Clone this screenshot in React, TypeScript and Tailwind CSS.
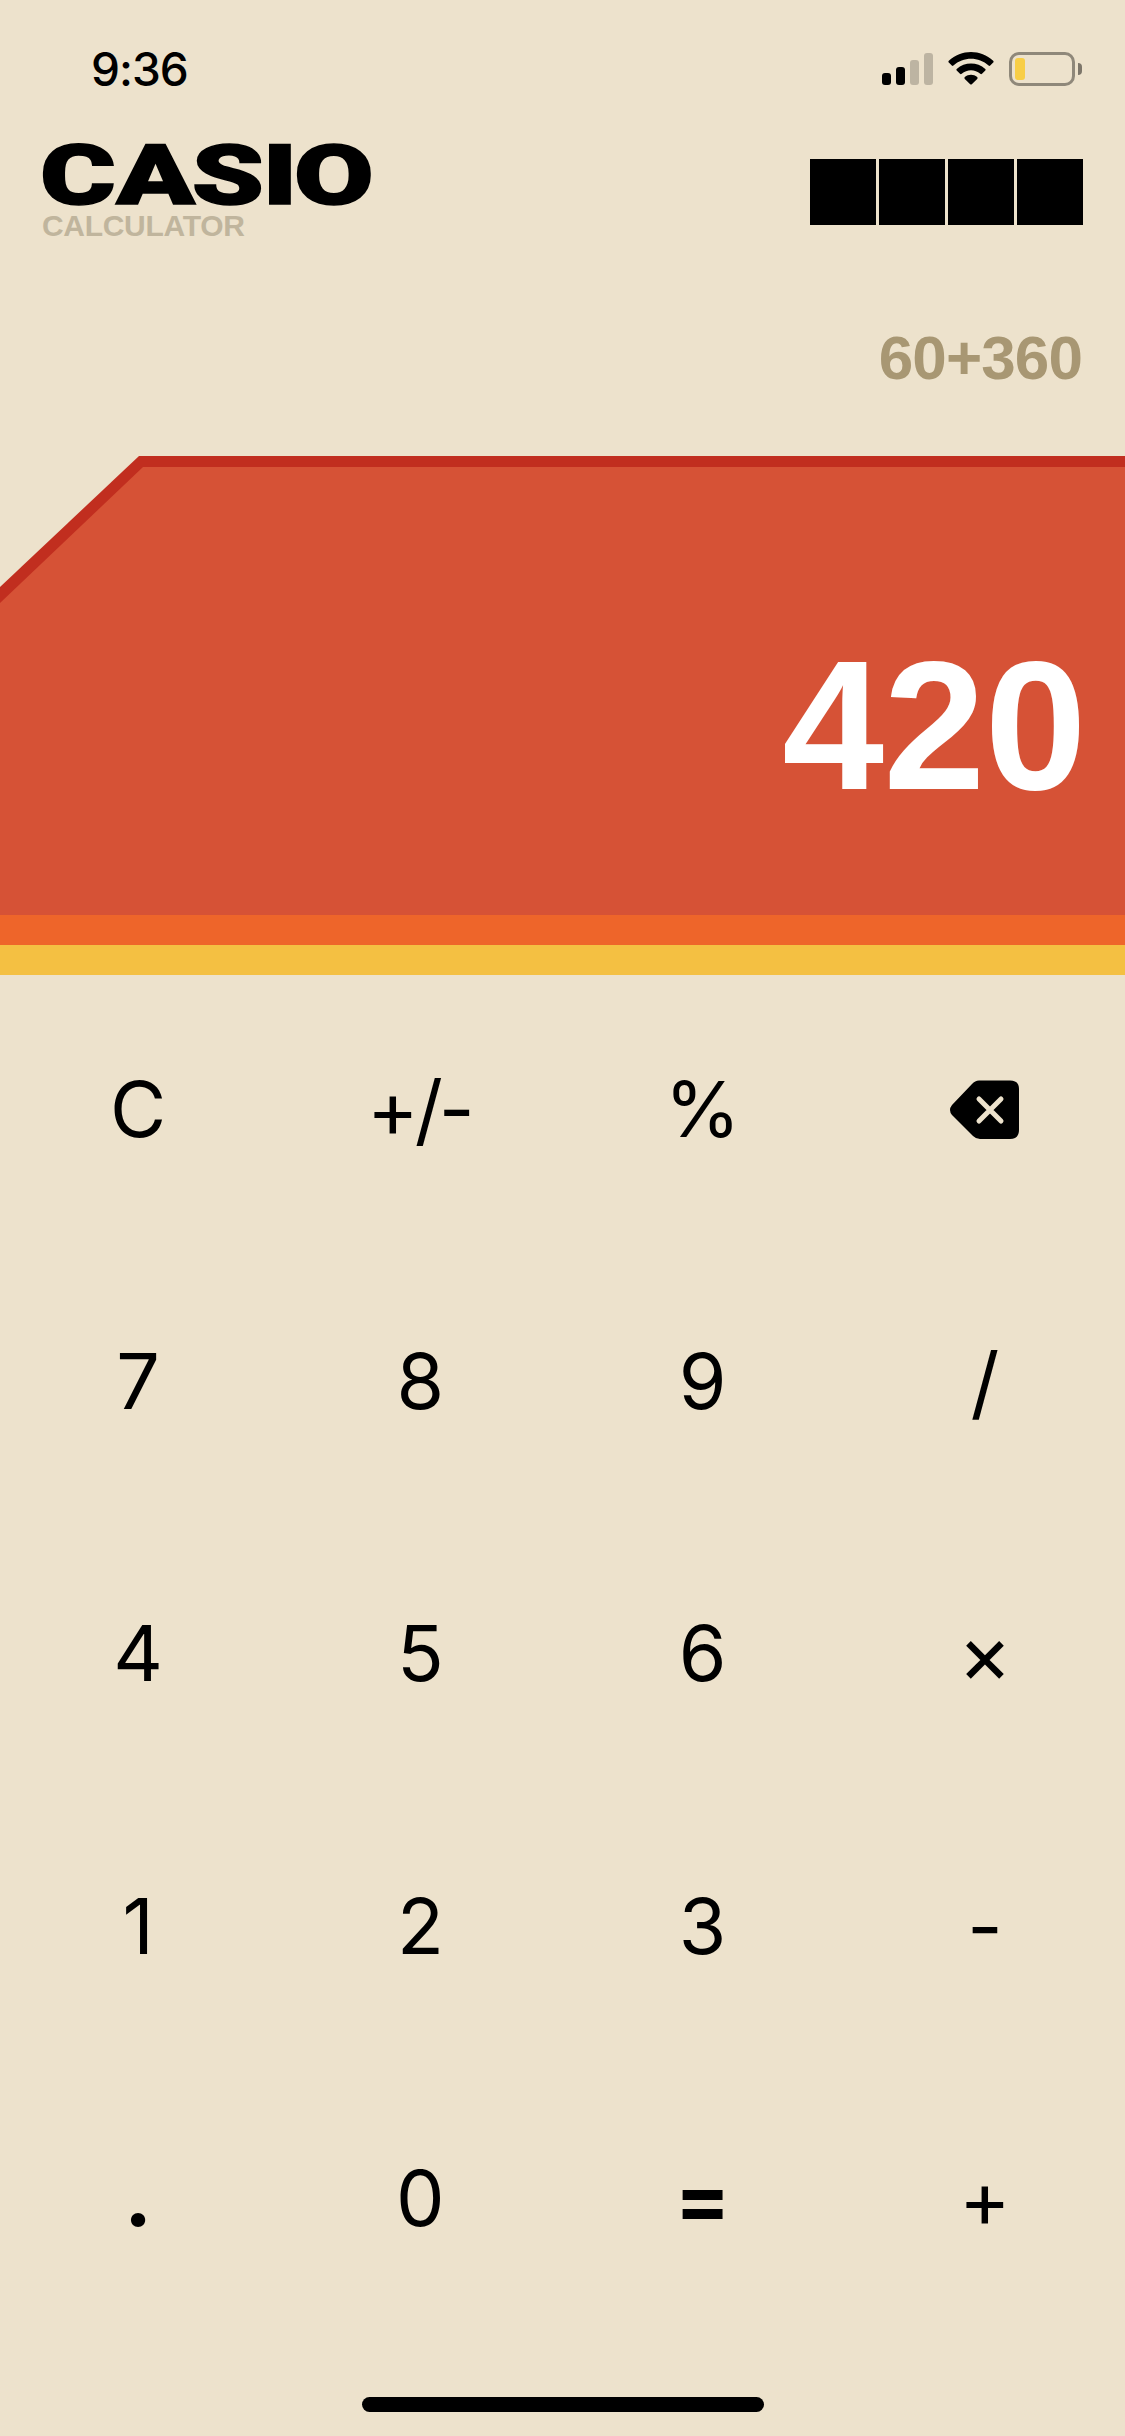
import type { ReactNode } from "react";

function StatusBar() {
  return (
    <div className="flex h-[138px] items-start justify-between pl-[91px] pr-[43px] pt-[52px]">
      <span className="text-[46px] font-[540] leading-[35px] tracking-[-1px]">9:36</span>
      <div className="flex items-start">
        <div className="mt-px flex h-8 items-end gap-[5px]">
          <i className="h-3 w-[9px] rounded-[3px] bg-black" />
          <i className="h-[18px] w-[9px] rounded-[3px] bg-black" />
          <i className="h-[25px] w-[9px] rounded-[3px] bg-[#bdb4a2]" />
          <i className="h-8 w-[9px] rounded-[3px] bg-[#bdb4a2]" />
        </div>
        <svg className="ml-[15px] h-[33px] w-[46px]" viewBox="0 0 46 33">
          <path d="M0.8 8.8C13.2-2.9 32.8-2.9 45.2 8.8Q46 9.7 45.2 10.5L42.2 13.5Q41.4 14.3 40.6 13.5C30.6 4.5 15.4 4.5 5.4 13.5Q4.6 14.3 3.8 13.5L0.8 10.5Q0 9.7 0.8 8.8Z" />
          <path d="M8.7 16.9C16.8 9.6 29.2 9.6 37.3 16.9Q38.1 17.8 37.3 18.6L34 21.8Q33.2 22.6 32.3 21.8C26.9 17.1 19.1 17.1 13.7 21.8Q12.8 22.6 12 21.8L8.7 18.6Q7.9 17.8 8.7 16.9Z" />
          <path d="M16.8 25.1C20.4 22.1 25.6 22.1 29.2 25.1Q30.1 26 29.2 26.9L23.8 32.2Q23 33 22.2 32.2L16.8 26.9Q15.9 26 16.8 25.1Z" />
        </svg>
        <div className="ml-[15px] h-[34px] w-[66px] rounded-[10px] border-3 border-[#8f887a] p-[3px]">
          <div className="h-[22px] w-[10px] rounded-[3px] bg-[#f8ce46]" />
        </div>
        <div className="ml-[3px] mt-[11px] h-3 w-1 rounded-r-full bg-[#7d766a]" />
      </div>
    </div>
  );
}

function Header() {
  return (
    <header className="flex h-[118px] justify-between px-[42px]">
      <div className="font-['Liberation_Sans',Arial,sans-serif]">
        <svg className="h-[72px] w-[332px] overflow-visible" viewBox="0 0 332 72">
          <text
            transform="translate(0 65.5) scale(1.4 1)"
            x="-1.5 53 107 157.5 180"
            fontSize="82.5"
            fontWeight="900"
            fontFamily="Roboto, sans-serif"
            stroke="black"
            strokeWidth="1.5"
          >
            CASIO
          </text>
        </svg>
        <div className="text-[30px] font-bold leading-[32px] tracking-[-0.3px] text-[#c0b59d]">CALCULATOR</div>
      </div>
      <div className="flex gap-[3px] pt-[21px]">
        {[0, 1, 2, 3].map((n) => (
          <div key={n} className="size-[66px] bg-black" />
        ))}
      </div>
    </header>
  );
}

function Display() {
  return (
    <section className="font-['Liberation_Sans',Arial,sans-serif] font-bold">
      <div className="flex h-[200px] justify-end pr-[43px] pt-[69px] text-[62px] leading-[66px] tracking-[-0.9px] text-[#a89773]">
        60+360
      </div>
      <div className="h-[459px] bg-[#c12e1f] [clip-path:polygon(0_131px,139px_0,100%_0,100%_100%,0_100%)]">
        <div className="flex h-full justify-end bg-[#d65236] pr-[39px] pt-[167px] text-[183px] leading-[206px] tracking-[-0.5px] text-white [clip-path:polygon(0_147px,143px_11px,100%_11px,100%_100%,0_100%)]">
          420
        </div>
      </div>
      <div className="h-[30px] bg-[#ee652a]" />
      <div className="h-[30px] bg-[#f4c042]" />
    </section>
  );
}

function BackspaceIcon() {
  return (
    <svg className="mt-[2px] h-[60px] w-[70px]" viewBox="0 0 70 60">
      <path d="M29 0.5H60Q69 0.5 69 9V50Q69 59 60 59H30Q26 59 23 56L2 35Q-2 30 2 25L22 4Q25 0.5 29 0.5Z" />
      <path d="M29 19L51 41M51 19L29 41" stroke="#ede2cc" strokeWidth="5" strokeLinecap="round" />
    </svg>
  );
}

const keys: ReactNode[] = [
  "C",
  <span className="pr-[3px] text-[78px] tracking-[-4px]">+/-</span>,
  "%",
  <BackspaceIcon />,
  "7", "8", "9",
  <span className="text-[80px]">/</span>,
  "4", "5", "6",
  <span className="text-[82px]">×</span>,
  "1", "2", "3", "-",
  <span className="font-extrabold">.</span>,
  "0",
  <span className="text-[82px] font-bold">=</span>,
  <span className="text-[78px]">+</span>,
];

export default function App() {
  return (
    <main className="flex h-[2436px] w-[1125px] flex-col overflow-hidden bg-[#ede2cc] font-['Inter',sans-serif] text-black">
      <StatusBar />
      <Header />
      <Display />
      <div className="-ml-[3px] grid h-[1362px] w-[1129px] grid-cols-4 grid-rows-5">
        {keys.map((key, i) => (
          <button key={i} className="flex items-center justify-center pb-[4px] text-[77px] leading-none">
            {key}
          </button>
        ))}
      </div>
      <div className="mt-[60px] h-[15px] w-[402px] self-center rounded-full bg-black" />
    </main>
  );
}
